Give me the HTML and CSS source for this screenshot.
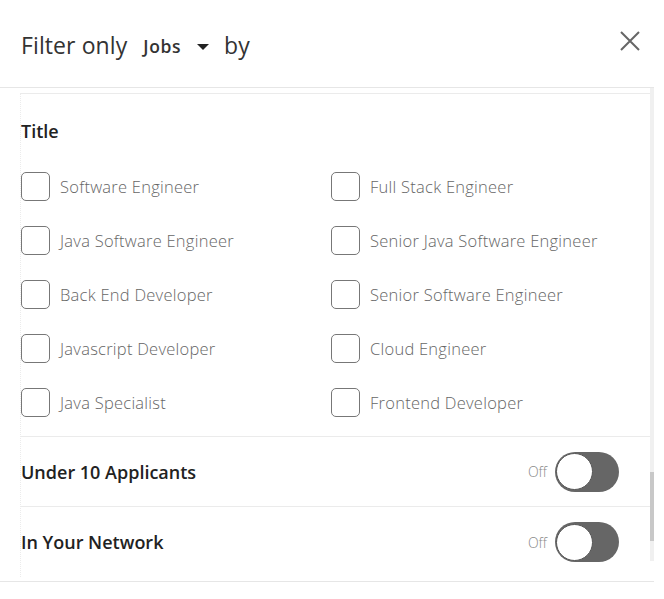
FILE: index.html
```html
<!DOCTYPE html>
<html>
<head>
<meta charset="utf-8">
<link rel="stylesheet" href="styles.css">
</head>
<body>
<div class="modal">
  <header class="header">
    <h1 class="heading">Filter only <button class="type-select">Jobs <span class="caret"></span></button> by</h1>
    <button class="close" aria-label="Close">
      <svg width="20" height="20" viewBox="0 0 20 20"><path d="M1 1 L19 19 M19 1 L1 19" stroke="#666" stroke-width="2" fill="none"/></svg>
    </button>
  </header>
  <div class="body">
    <div class="content">
      <section class="section title-section">
        <h2 class="section-title">Title</h2>
        <ul class="options">
          <li class="option"><span class="box"></span>Software Engineer</li>
          <li class="option"><span class="box"></span>Full Stack Engineer</li>
          <li class="option"><span class="box"></span>Java Software Engineer</li>
          <li class="option"><span class="box"></span>Senior Java Software Engineer</li>
          <li class="option"><span class="box"></span>Back End Developer</li>
          <li class="option"><span class="box"></span>Senior Software Engineer</li>
          <li class="option"><span class="box"></span>Javascript Developer</li>
          <li class="option"><span class="box"></span>Cloud Engineer</li>
          <li class="option"><span class="box"></span>Java Specialist</li>
          <li class="option"><span class="box"></span>Frontend Developer</li>
        </ul>
      </section>
      <section class="section toggle-section">
        <h2 class="section-title">Under 10 Applicants</h2>
        <div class="toggle-wrap"><span class="off">Off</span><span class="toggle"><span class="knob"></span></span></div>
      </section>
      <section class="section toggle-section">
        <h2 class="section-title">In Your Network</h2>
        <div class="toggle-wrap"><span class="off">Off</span><span class="toggle"><span class="knob"></span></span></div>
      </section>
    </div>
    <div class="scrollbar"><div class="thumb"></div></div>
  </div>
  <footer class="footer"></footer>
</div>
</body>
</html>
```

FILE: styles.css
```css
* { box-sizing: border-box; }
html, body { margin: 0; padding: 0; background: #fff; }
body {
  font-family: "Open Sans", "Noto Sans", sans-serif;
  color: #333;
}
.modal {
  width: 654px;
  display: flex;
  flex-direction: column;
}
.header {
  height: 88px;
  border-bottom: 1px solid #e6e6e6;
  display: flex;
  align-items: center;
  justify-content: space-between;
  padding: 0 14px 0 21px;
}
.heading {
  margin: 0;
  font-size: 23px;
  font-weight: 400;
  color: #333;
  display: flex;
  align-items: center;
  letter-spacing: 0.1px;
  padding-top: 3px;
}
.type-select {
  border: 0;
  background: none;
  font-family: inherit;
  font-size: 17.5px;
  font-weight: 600;
  color: #333;
  padding: 0;
  margin: 2px 15px 0 16px;
  display: flex;
  align-items: center;
  letter-spacing: 0.6px;
}
.caret {
  width: 0; height: 0;
  border-left: 6px solid transparent;
  border-right: 6px solid transparent;
  border-top: 6px solid #222;
  margin-left: 16px;
  margin-top: 2px;
}
.close {
  border: 0; background: none; padding: 0;
  width: 20px; height: 20px;
  margin-top: -5px;
  display: flex;
}
.body {
  height: 493px;
  display: flex;
}
.content {
  flex: 1;
  margin-left: 20px;
  margin-top: 5px;
  border-top: 1px solid #ebebeb;
  border-left: 1px dotted #ececec;
  align-self: flex-start;
}
.section {
  border-bottom: 1px solid #ebebeb;
}
.section:last-child { border-bottom: 0; }
.section-title {
  margin: 0;
  font-size: 18px;
  font-weight: 600;
  color: #222;
  line-height: 24px;
}
.title-section {
  padding: 25px 0 20px 0;
}
.options {
  list-style: none;
  margin: 29px 0 0 0;
  padding: 0;
  display: grid;
  grid-template-columns: 310px 1fr;
  row-gap: 26px;
}
.option {
  display: flex;
  align-items: center;
  height: 28px;
  font-size: 16.5px;
  font-weight: 300;
  color: #666;
  letter-spacing: 0.25px;
}
.box {
  width: 29px; height: 29px;
  border: 1px solid #777;
  border-radius: 5px;
  margin-right: 10px;
  flex: none;
}
.toggle-section {
  height: 70px;
  display: flex;
  align-items: center;
  justify-content: space-between;
  padding-right: 31px;
}
.toggle-wrap {
  display: flex;
  align-items: center;
}
.off {
  font-size: 14px;
  color: #888;
  margin-right: 8px;
  font-weight: 300;
}
.toggle {
  width: 64px; height: 40px;
  border-radius: 20px;
  background: #666;
  display: flex;
  align-items: center;
  padding-left: 1px;
}
.knob {
  width: 37px; height: 37px;
  border-radius: 50%;
  background: #fff;
  border: 1.5px solid #555;
}
.scrollbar {
  width: 4px;
  height: 473px;
  background: #f0f0f0;
  flex: none;
}
.thumb {
  margin-top: 384px;
  height: 69px;
  background: #c8c8c8;
}
.footer {
  border-top: 1px solid #e6e6e6;
  height: 18px;
}
```
